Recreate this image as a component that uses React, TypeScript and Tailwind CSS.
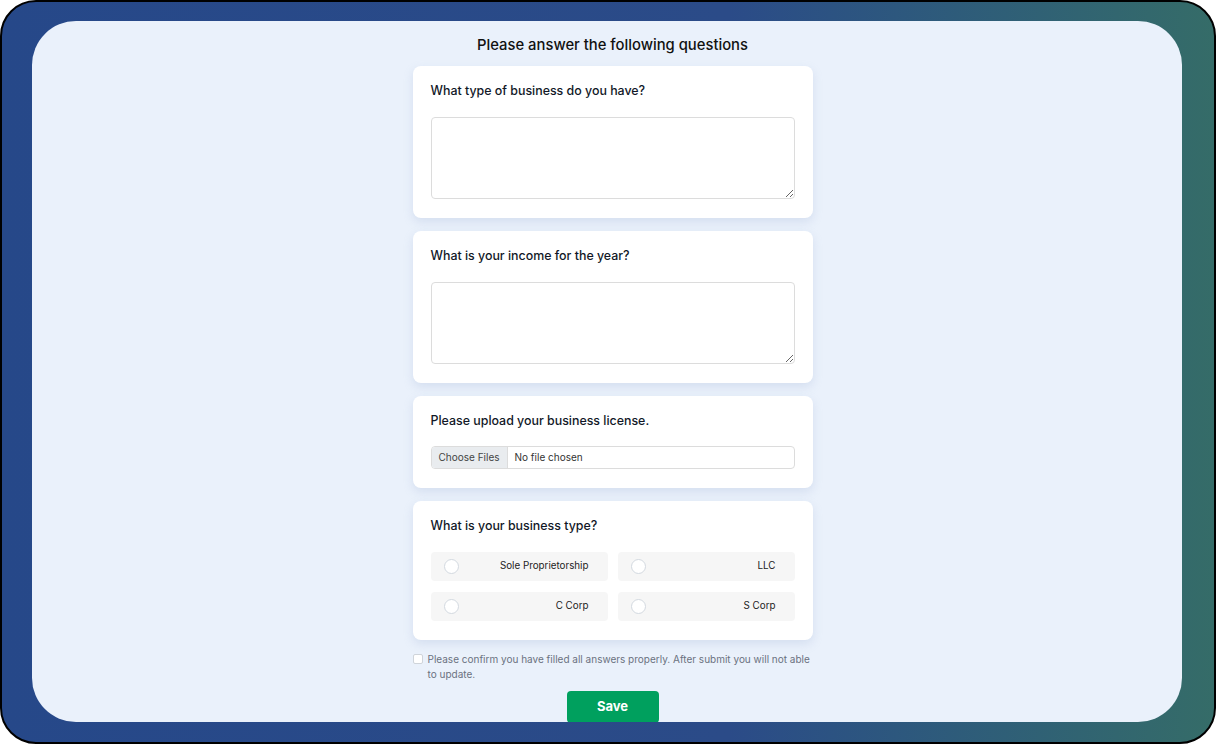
import { useState } from "react";

const options = ["Sole Proprietorship", "LLC", "C Corp", "S Corp"];

function Card({ children }: { children: React.ReactNode }) {
  return (
    <div className="w-[400px] rounded-lg bg-white px-[18px] pt-[15px] pb-[19px] shadow-[0_4px_10px_rgba(150,170,210,0.25)]">
      {children}
    </div>
  );
}

function Question({ text }: { text: string }) {
  return <p className="text-[12.4px] font-medium leading-5 text-[#111827]">{text}</p>;
}

export default function App() {
  const [picked, setPicked] = useState("");
  const [agree, setAgree] = useState(false);

  return (
    <div className="h-[744px] w-full bg-white" style={{ fontFamily: "Inter, 'Noto Sans', sans-serif" }}>
      <div className="h-full rounded-[36px] border-2 border-black bg-linear-to-r from-[#264889] via-[#2b4b88] via-60% to-[#356c68] pl-[30px] pr-[32px] pt-[19px] pb-[20px]">
        <div className="h-full overflow-hidden rounded-[44px] bg-[#eaf1fb]">
          <div className="flex flex-col items-center pt-[13px] pl-[11px]">
            <h1 className="mb-[10px] text-[14.8px] font-medium leading-[22px] text-[#111]">
              Please answer the following questions
            </h1>

            <div className="flex flex-col gap-[13px]">
              <Card>
                <Question text="What type of business do you have?" />
                <textarea className="mt-[16px] block h-[82px] w-full rounded-sm border border-[#dcdcdc] bg-white outline-none" />
              </Card>

              <Card>
                <Question text="What is your income for the year?" />
                <textarea className="mt-[16px] block h-[82px] w-full rounded-sm border border-[#dcdcdc] bg-white outline-none" />
              </Card>

              <Card>
                <Question text="Please upload your business license." />
                <div className="mt-[15px] flex h-[23px] items-center overflow-hidden rounded-sm border border-[#dcdcdc] text-[10px] text-[#333]">
                  <span className="flex h-full items-center border-r border-[#dcdcdc] bg-[#e9ecef] px-[7px] text-[#444]">
                    Choose Files
                  </span>
                  <span className="pl-[7px]">No file chosen</span>
                </div>
              </Card>

              <Card>
                <Question text="What is your business type?" />
                <div className="mt-[16px] grid grid-cols-2 gap-x-[10px] gap-y-[11px]">
                  {options.map((o) => (
                    <button
                      key={o}
                      onClick={() => setPicked(o)}
                      className="flex h-[29px] items-center justify-between rounded-sm bg-[#f6f6f6] pl-[13px] pr-[19px] text-[9.8px] text-[#222]"
                    >
                      <span
                        className={
                          "h-[15px] w-[15px] rounded-full border bg-white " +
                          (picked === o ? "border-[#00a05e] border-[4px]" : "border-[#d3d9e0]")
                        }
                      />
                      <span>{o}</span>
                    </button>
                  ))}
                </div>
              </Card>
            </div>

            <label className="mt-[12px] flex w-[400px] items-start gap-[5px] text-[10px] leading-[15px] text-[#6b7280]">
              <input
                type="checkbox"
                checked={agree}
                onChange={() => setAgree(!agree)}
                className="mt-[2px] h-[10px] w-[10px] shrink-0 appearance-none rounded-[2px] border border-[#cfd4da] bg-white"
              />
              <span>
                Please confirm you have filled all answers properly. After submit you will not able to update.
              </span>
            </label>

            <button className="mt-[9px] h-[32px] w-[92px] rounded-[4px] bg-[#00a05e] text-[13px] font-bold text-white">
              Save
            </button>
          </div>
        </div>
      </div>
    </div>
  );
}
